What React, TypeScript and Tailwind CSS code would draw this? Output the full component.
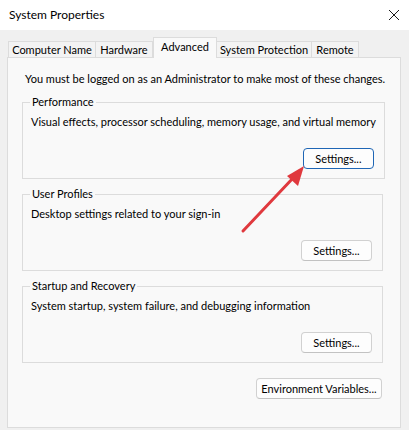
import * as React from 'react';

const tabs = [
    { label: 'Computer Name', w: 'w-[88px]' },
    { label: 'Hardware', w: 'w-[57px]' },
    { label: 'Advanced', w: 'w-[64px]' },
    { label: 'System Protection', w: 'w-[95px]' },
    { label: 'Remote', w: 'w-[47px]' },
];

const groups = [
    { title: 'Performance', text: 'Visual effects, processor scheduling, memory usage, and virtual memory', focused: true },
    { title: 'User Profiles', text: 'Desktop settings related to your sign-in', focused: false },
    { title: 'Startup and Recovery', text: 'System startup, system failure, and debugging information', focused: false },
];

function WinButton({ label, focused, className }: { label: string; focused?: boolean; className?: string }) {
    return (
        <button
            className={[
                'h-[21px] rounded-[4px] bg-[#fdfdfd] text-[11px] leading-[16px] text-black whitespace-nowrap',
                focused ? 'border border-[#1f66b5]' : 'border border-[#d1d1d1] border-b-[#c2c2c2]',
                className || '',
            ].join(' ')}
        >
            {label}
        </button>
    );
}

function GroupBox({ title, text, focused }: { title: string; text: string; focused: boolean }) {
    return (
        <fieldset className="border border-[#dcdcdc] px-2 pt-1 pb-[9px]">
            <legend className="-ml-[1px] px-[2px] text-[11px] leading-[16px] whitespace-nowrap">{title}</legend>
            <p className="text-[11px] leading-[16px] whitespace-nowrap">{text}</p>
            <div className="mt-[18px] flex justify-end pr-[2px]">
                <WinButton label="Settings..." focused={focused} className="w-[71px]" />
            </div>
        </fieldset>
    );
}

export default function App() {
    return (
        <div className="relative w-[409px] h-[430px] overflow-hidden bg-[#f0f0f0] text-black font-['Lato',sans-serif]">
            {/* title bar */}
            <div className="h-[30px] bg-white flex items-center justify-between pl-[9px] pr-[8px]">
                <span className="text-[12px] leading-[16px]">System Properties</span>
                <svg width="12" height="12" viewBox="0 0 12 12" className="mr-[1px]">
                    <path d="M1 1 L11 11 M11 1 L1 11" stroke="#1a1a1a" strokeWidth="1" />
                </svg>
            </div>

            <div className="px-[7px] pt-[8px]">
                {/* tabs */}
                <div className="flex items-end h-[19px] pl-[1px]">
                    {tabs.map((t) => {
                        const active = t.label === 'Advanced';
                        return (
                            <div
                                key={t.label}
                                className={[
                                    t.w,
                                    'text-center whitespace-nowrap text-[11px] border-[#dcdcdc]',
                                    active
                                        ? 'relative z-10 -mb-[1px] h-[21px] leading-[18px] bg-[#f9f9f9] border border-b-0'
                                        : 'h-[16px] leading-[16px] bg-[#f3f3f3] border-t border-r first:border-l',
                                ].join(' ')}
                            >
                                {t.label}
                            </div>
                        );
                    })}
                </div>

                {/* tab panel */}
                <div className="h-[371px] w-[394px] border border-[#dcdcdc] bg-[#f9f9f9] pl-[14px] pr-[17px] pt-[13px]">
                    <p className="pl-[3px] text-[11px] leading-[16px] whitespace-nowrap">
                        You must be logged on as an Administrator to make most of these changes.
                    </p>
                    <div className="mt-[7px] flex flex-col gap-[7px]">
                        {groups.map((g) => (
                            <GroupBox key={g.title} {...g} />
                        ))}
                    </div>
                    <div className="mt-[15px] flex justify-end pr-[1px]">
                        <WinButton label="Environment Variables..." className="w-[126px]" />
                    </div>
                </div>
            </div>

            {/* annotation arrow */}
            <svg className="absolute inset-0 pointer-events-none" width="409" height="430" viewBox="0 0 409 430">
                <line x1="243" y1="231" x2="294" y2="177" stroke="#e0393e" strokeWidth="3" strokeLinecap="round" />
                <polygon points="304,166 287,176 298,186" fill="#e0393e" />
            </svg>
        </div>
    );
}
